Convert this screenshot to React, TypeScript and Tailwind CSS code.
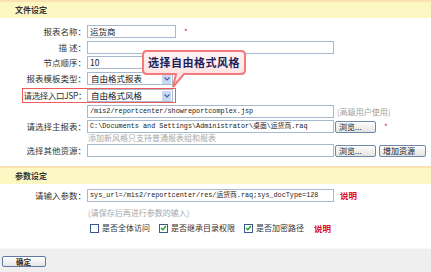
import React from "react";

const cjk = "font-['Noto_Sans_CJK_SC','Noto_Sans',sans-serif]";
const mono = "font-['Liberation_Mono','Noto_Sans_CJK_SC',monospace]";

function Label({ text, tight }: { text: string; tight?: boolean }) {
  return (
    <div
      className={`w-[87px] shrink-0 text-right pr-[1px] text-[8.5px] leading-none text-[#333] whitespace-nowrap ${
        tight ? "tracking-[-0.4px]" : ""
      }`}
    >
      {text}
    </div>
  );
}

function Input({
  width,
  value,
  isMono,
}: {
  width: number;
  value?: string;
  isMono?: boolean;
}) {
  return (
    <div
      className={`h-[13px] border border-[#a8b8cf] bg-white flex items-center px-[2px] overflow-hidden whitespace-nowrap text-[#222] ${
        isMono ? `${mono} text-[6.8px]` : "text-[8.5px]"
      }`}
      style={{ width }}
    >
      {value}
    </div>
  );
}

function Select({ value }: { value: string }) {
  return (
    <div className="w-[86px] h-[13px] border border-[#a8b8cf] bg-white flex items-center justify-between pl-[3px] pr-[1px]">
      <span className="text-[8.5px] leading-none text-[#111]">{value}</span>
      <span className="w-[9px] h-[10px] bg-[#c9d8f2] rounded-[1px] flex items-center justify-center">
        <svg width="6" height="4" viewBox="0 0 6 4">
          <path d="M0.5 0.5 L3 3 L5.5 0.5" fill="none" stroke="#4a5f9a" strokeWidth="1.2" />
        </svg>
      </span>
    </div>
  );
}

function Btn({ text, width }: { text: string; width: number }) {
  return (
    <div
      className="h-[12px] border border-[#6f87ab] rounded-[2px] bg-gradient-to-b from-[#fdfdfd] to-[#e4e4e0] flex items-center pl-[3px] text-[8px] leading-none text-[#222] whitespace-nowrap"
      style={{ width }}
    >
      {text}
    </div>
  );
}

function Row({ children, className = "" }: { children: React.ReactNode; className?: string }) {
  return <div className={`flex items-center h-[13px] ${className}`}>{children}</div>;
}

function Header({ text, className = "" }: { text: string; className?: string }) {
  return (
    <div
      className={`h-[18px] border-t-2 border-[#fbe2b2] bg-[#fdf7c4] flex items-center pl-[15px] text-[8px] font-bold text-[#333] ${className}`}
    >
      {text}
    </div>
  );
}

function Check({ checked, text }: { checked?: boolean; text: string }) {
  return (
    <div className="flex items-center">
      <span className="w-[9px] h-[9px] border border-[#3c5a8c] bg-white flex items-center justify-center">
        {checked && (
          <svg width="7" height="6" viewBox="0 0 7 6">
            <path d="M1 3 L2.8 4.8 L6 1" fill="none" stroke="#22a02a" strokeWidth="1.4" />
          </svg>
        )}
      </span>
      <span className="ml-[3px] text-[8px] leading-none text-[#333]">{text}</span>
    </div>
  );
}

export default function App() {
  return (
    <div className={`relative w-[431px] h-[272px] bg-white overflow-hidden ${cjk}`}>
      <Header text="文件设定" />

      <Row className="mt-[7px]">
        <Label text="报表名称：" />
        <Input width={89} value="运货商" />
        <span className="ml-[8px] text-[8px] text-[#e0203a]">*</span>
      </Row>
      <Row className="mt-[3px]">
        <Label text="描 述：" />
        <Input width={247} />
      </Row>
      <Row className="mt-[2px]">
        <Label text="节点顺序：" />
        <Input width={89} value="10" />
      </Row>
      <Row className="mt-[3px]">
        <Label text="报表模板类型：" />
        <Select value="自由格式报表" />
      </Row>
      <Row className="mt-[4px]">
        <Label text="请选择入口JSP：" tight />
        <Select value="自由格式风格" />
      </Row>
      <Row className="mt-[3px]">
        <Label text="" />
        <Input width={247} value="/mis2/reportcenter/showreportcomplex.jsp" isMono />
        <span className="ml-[3px] text-[8px] leading-none text-[#a0a0a0]">(高级用户使用)</span>
      </Row>
      <Row className="mt-[2px]">
        <Label text="请选择主报表：" />
        <Input width={247} value="C:\Documents and Settings\Administrator\桌面\运货商.raq" isMono />
        <div className="ml-[1px]">
          <Btn text="浏览..." width={41} />
        </div>
        <span className="ml-[8px] text-[8px] text-[#e0203a]">*</span>
      </Row>
      <div className="h-[10px] flex items-center pl-[88px] text-[8px] leading-none text-[#a8a8a8]">
        添加新风格只支持普通报表组和报表
      </div>
      <Row className="mt-[1px]">
        <Label text="选择其他资源：" />
        <Input width={247} />
        <div className="ml-[1px] flex gap-[3px]">
          <Btn text="浏览..." width={41} />
          <Btn text="增加资源" width={47} />
        </div>
      </Row>

      <Header text="参数设定" className="mt-[9px]" />

      <Row className="mt-[5px]">
        <Label text="请输入参数：" />
        <Input width={247} value="sys_url=/mis2/reportcenter/res/运货商.raq;sys_docType=128" isMono />
        <span className="ml-[6px] text-[8.5px] font-bold leading-none text-[#e0102a]">说明</span>
      </Row>
      <div className="mt-[6px] h-[10px] flex items-center pl-[88px] text-[8px] leading-none text-[#a8a8a8]">
        (请保存后再进行参数的输入)
      </div>
      <div className="mt-[5px] h-[10px] flex items-center pl-[90px] gap-[9px]">
        <Check text="是否全体访问" />
        <Check checked text="是否继承目录权限" />
        <Check checked text="是否加密路径" />
        <span className="ml-[1px] text-[8.5px] font-bold leading-none text-[#e0102a]">说明</span>
      </div>

      <div className="mt-[15px] h-[24px] bg-[#efefef] border-t border-[#f7f7f7] pt-[7px] pl-[2px]">
        <div className="w-[44px] h-[11px] border border-[#5f7ba5] rounded-[2px] bg-gradient-to-b from-[#ffffff] to-[#e6e6e6] flex items-center pl-[13px] text-[7.5px] font-bold leading-none text-[#333]">
          确定
        </div>
      </div>

      {/* red highlight around entry jsp row */}
      <div className="absolute left-[22px] top-[88px] w-[154px] h-[15px] border border-[#f05a5a] pointer-events-none" />

      {/* callout */}
      <div className="absolute left-[140px] top-[49px] w-[108px] h-[42px]">
        <svg width="108" height="42" viewBox="0 0 108 42" className="absolute inset-0">
          <defs>
            <linearGradient id="cg" x1="0" y1="0" x2="0" y2="1">
              <stop offset="0" stopColor="#fff4f4" />
              <stop offset="1" stopColor="#fcdada" />
            </linearGradient>
          </defs>
          <path
            d="M7 2 H101 Q105 2 105 6 V21 Q105 25 101 25 H44 L33 38 L36 25 H7 Q3 25 3 21 V6 Q3 2 7 2 Z"
            fill="url(#cg)"
            stroke="#f27a7a"
            strokeWidth="2"
          />
        </svg>
        <div className="absolute left-[8px] top-[4px] h-[19px] flex items-center text-[11px] font-bold tracking-[0.5px] text-[#1b1f5c] whitespace-nowrap">
          选择自由格式风格
        </div>
      </div>
    </div>
  );
}
